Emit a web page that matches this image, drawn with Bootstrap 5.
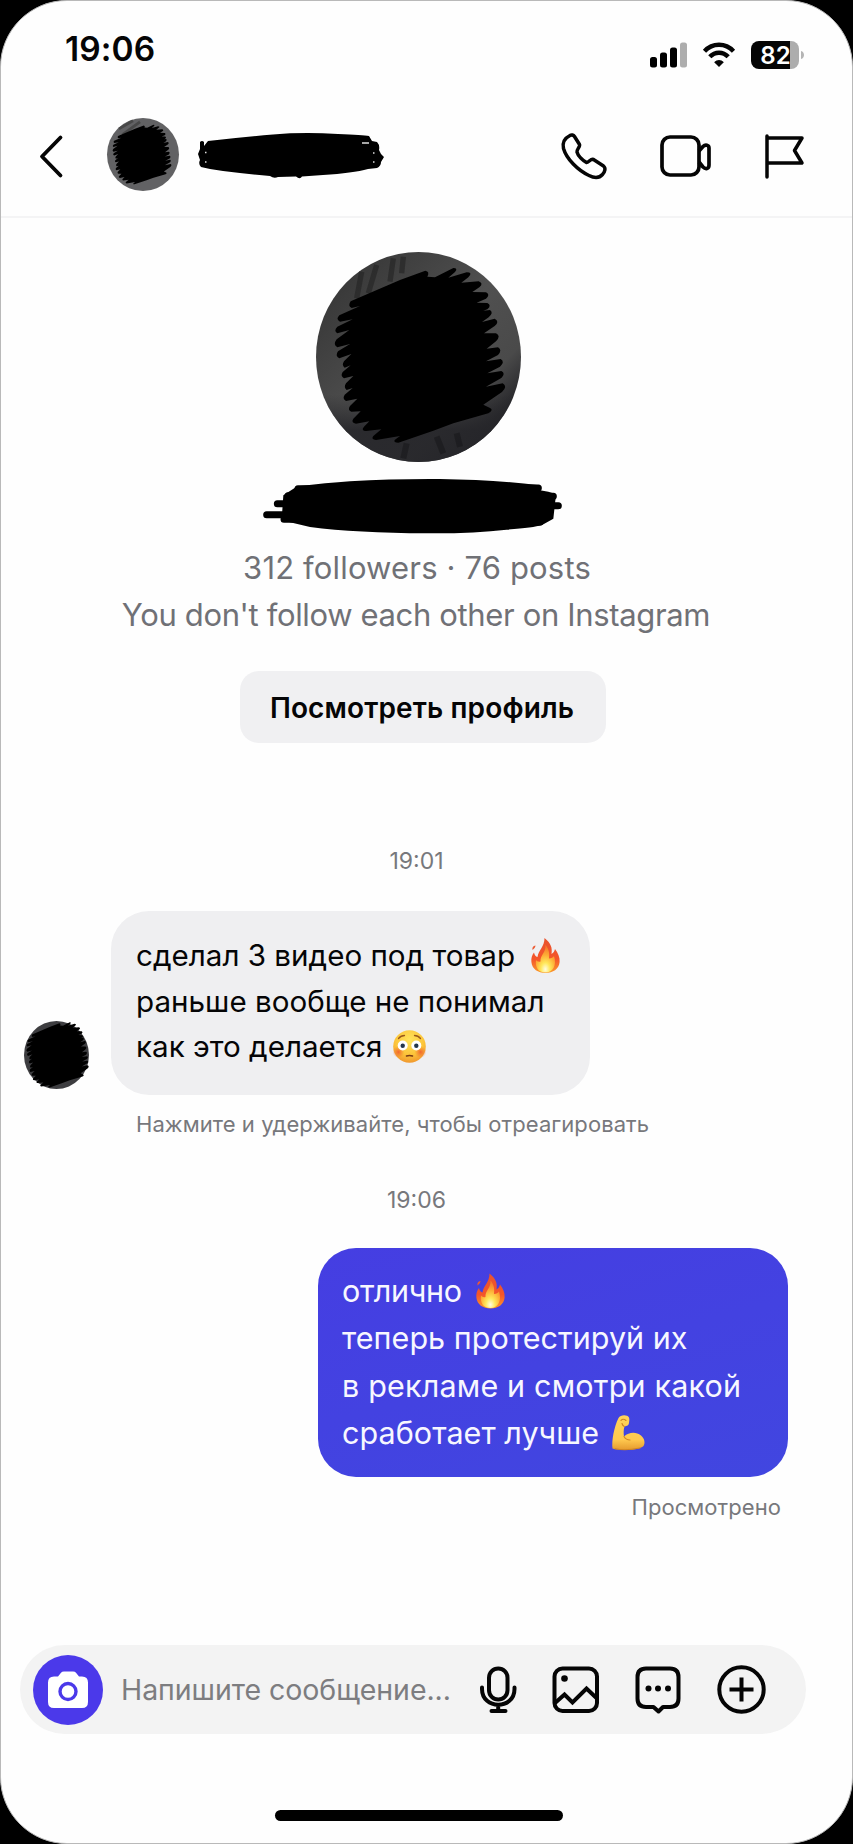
<!DOCTYPE html>
<html lang="ru">
<head>
<meta charset="utf-8">
<meta name="viewport" content="width=device-width, initial-scale=1">
<title>Чат</title>
<link rel="stylesheet" href="https://cdn.jsdelivr.net/npm/bootstrap@5.3.0/dist/css/bootstrap.min.css">
<style>
html,body{margin:0;background:#000;overflow:hidden}
body{font-family:Inter,"Liberation Sans",sans-serif;color:#050506}
svg{display:block;flex:none;overflow:visible}
.phone{width:853px;height:1844px;background:#fefefe;border:1px solid #b9b9b9;border-radius:67px;overflow:hidden}
.status{height:90px;padding:28px 48px 0 64px}
.clock{font-size:33.5px;line-height:40px;font-weight:600;letter-spacing:.1px}
.status-icons{margin-top:12px}
.topbar{height:127px;border-bottom:2px solid #f4f4f5;padding:5px 48px 0 38px}
.profile{padding:34px 19px 0 0}
.meta{font-size:31px;line-height:46.6px;color:#707176}
.meta-count{letter-spacing:.16px}
.meta-follow{letter-spacing:-.35px;margin-right:2px}
.btn-profile{width:366px;height:72px;margin:33px 0 0 12px;border-radius:19px;background:#f0f0f2;font-size:28px;letter-spacing:.13px;font-weight:600;color:#050506;padding:2px 2px 0 0}
.stamp{font-size:23px;line-height:26px;color:#77787c;padding-right:20px}
.bubble{border-radius:38px;white-space:nowrap}
.bubble-in{width:479px;height:184px;background:#efeff1;padding:22px 25px;font-size:29.6px;line-height:45.5px}
.bubble-out{width:470px;height:229px;background:linear-gradient(165deg,#453ee2,#4146e0);color:#f7f7ff;padding:19px 24px;font-size:30.5px;line-height:47.2px;letter-spacing:.05px;margin-right:64px}
.line-first{letter-spacing:-.35px}
.line-wide{letter-spacing:.18px}
.note{font-size:22px;line-height:26px;color:#77787c;letter-spacing:.06px}
.composer{width:786px;height:89px;border-radius:45px;background:#f3f3f3;margin:125px 0 0 19px;padding:0 40px 0 13px}
.cam{width:70px;height:70px;background:#4b39ea}
.placeholder-text{font-size:28.5px;letter-spacing:-.05px;color:#7d7d80;width:338px;margin-left:18px;line-height:40px;white-space:nowrap}
.home{width:288px;height:11px;margin:76px 0 0 274px;background:#000}
</style>
<script src="https://cdn.jsdelivr.net/npm/bootstrap@5.3.0/dist/js/bootstrap.bundle.min.js"></script>
</head>
<body>
<svg width="0" height="0" class="position-absolute">
<defs>
<linearGradient id="photo" x1="0" y1="0" x2="1" y2="1"><stop offset="0" stop-color="#454545"/><stop offset=".15" stop-color="#3a3a3a"/><stop offset=".5" stop-color="#505050"/><stop offset=".72" stop-color="#4a4a4a"/><stop offset=".85" stop-color="#242428"/><stop offset="1" stop-color="#222"/></linearGradient>
<linearGradient id="photoShade" x1="0" y1="0" x2="0" y2="1"><stop offset=".68" stop-color="#26262a" stop-opacity="0"/><stop offset=".85" stop-color="#26262a" stop-opacity=".9"/></linearGradient>
<linearGradient id="flameOuter" x1="0" y1="0" x2="0" y2="1"><stop offset="0" stop-color="#e8532f"/><stop offset=".6" stop-color="#f4552a"/><stop offset="1" stop-color="#fb9a2c"/></linearGradient>
<radialGradient id="flameInner" cx=".5" cy=".88" r=".8"><stop offset="0" stop-color="#fffde0"/><stop offset=".3" stop-color="#ffe75a"/><stop offset=".65" stop-color="#fdac35"/><stop offset="1" stop-color="#f57a2c"/></radialGradient>
<radialGradient id="faceFill" cx=".5" cy=".3" r=".75"><stop offset="0" stop-color="#ffe45c"/><stop offset=".6" stop-color="#fcc43a"/><stop offset="1" stop-color="#ee8f2c"/></radialGradient>
<radialGradient id="blush"><stop offset="0" stop-color="#f0552e" stop-opacity=".85"/><stop offset="1" stop-color="#f0702e" stop-opacity="0"/></radialGradient>
<linearGradient id="armFill" x1="0" y1="0" x2="0" y2="1"><stop offset="0" stop-color="#ffd45a"/><stop offset=".7" stop-color="#ffc94f"/><stop offset="1" stop-color="#e59a2e"/></linearGradient>
<symbol id="flame" viewBox="0 0 29 35">
<path d="M13.5 0C20 5 21.5 10 20.5 16C22.5 15 23.5 13 24 11C27 15 29 19 28.6 24C28 31 22 35 14.5 35C7 35 1 31 .4 24C0 20 1 17 3 14.5C3.6 17 4.5 18.5 6.5 19C7.500 12 13.500 9 13.500 0Z" fill="url(#flameOuter)"/>
<path d="M1.500 12C1 9.500 2 8 4.500 7.500C4.500 9.500 3 10.500 1.500 12Z" fill="#ec5a32"/>
<path d="M14.500 7C18.500 12 18.500 16 18 20.500C20.500 20.500 22 19.500 23 18C26 27 22 34.500 14.500 34.500C7 34.500 4 29 5 22C6 23.500 7.500 24 9.500 23.500C9 17 15 15 14.500 7Z" fill="url(#flameInner)"/>
</symbol>
<symbol id="scribble" viewBox="228 36 615 630">
<path fill="#000" d="M332 184 480 120 556 92 Q570 94 562 110L585 112 640 84Q655 84 645 96L625 113 680 97Q700 97 685 112L664 128 716 124Q732 130 718 142L697 156 738 157Q752 164 738 176L710 188 742 189Q756 196 742 208L730 212 750 210Q762 218 746 232L726 246 764 236Q780 244 764 258L732 280 768 280Q784 288 768 304L740 326 774 322Q788 330 774 345L738 364 782 357Q796 366 780 380L742 400 784 393Q798 400 784 414L738 440 788 430Q804 440 786 456L730 494 750 504Q762 510 745 520L640 550 580 572 475 608Q460 608 464 600L480 588 408 600Q392 598 400 588L424 568 378 573Q362 572 372 560L388 544 348 551Q332 548 340 536L362 514 334 515Q322 510 330 498L352 476 318 483Q306 476 314 464L338 444 320 450Q310 442 318 430L340 408 312 415Q300 408 308 396L332 376 314 383Q304 376 312 364L334 342 298 355Q284 348 294 334L330 312 292 322Q278 314 290 298L328 270 292 280Q280 272 292 260L338 238 300 245Q286 238 298 226L360 198 335 204Q322 198 332 184Z"/>
</symbol>
</defs>
</svg>

<main class="phone d-flex flex-column">
<div class="status d-flex justify-content-between align-items-start">
<div class="clock">19:06</div>
<div class="status-icons d-flex align-items-center">
<svg width="38" height="26" viewBox="0 0 38 26" style="margin-right:15px"><rect x="0" y="15" width="7" height="10.500" rx="2.500"/><rect x="10" y="10.500" width="7" height="15" rx="2.500"/><rect x="20" y="5.500" width="7" height="20" rx="2.500"/><rect x="30" y=".5" width="7" height="25" rx="2.500" fill="#adadad"/></svg>
<svg width="32" height="26" viewBox="0 0 32 26" style="margin-right:16px"><g fill="none" stroke="#050505" stroke-width="4.400"><path d="M1.500 9.200C9.500 .6 22.500 .6 30.500 9.200"/><path d="M6.800 14.800C12 9.300 20 9.300 25.200 14.800"/><path d="M11.200 20.200C14 17.200 18 17.200 20.800 20.200L16 25Z" fill="#050505" stroke="none"/></g></svg>
<svg width="53" height="28" viewBox="0 0 53 28"><path d="M8 0H39V28H8A8 8 0 0 1 0 20V8A8 8 0 0 1 8 0Z" fill="#050505"/><path d="M39 0h1a8 8 0 0 1 8 8v12a8 8 0 0 1-8 8h-1Z" fill="#adadad"/><path d="M50 10c4 1 4 7 0 8Z" fill="#b5b5b5"/><text x="24.500" y="22.500" text-anchor="middle" font-size="24" font-weight="600" fill="#fff" font-family="Inter,sans-serif">82</text></svg>
</div>
</div>

<header class="topbar d-flex align-items-center">
<svg width="24" height="42" viewBox="0 0 24 42" fill="none" stroke="#050505" stroke-width="3.800" stroke-linecap="round" stroke-linejoin="round"><path d="M21.500 2.500 3 21.500 21.500 40.500"/></svg>
<svg width="72" height="73" viewBox="228 36 615 630" preserveAspectRatio="none" style="margin:-4px 0 0 44px"><ellipse cx="535.500" cy="351" rx="307.500" ry="315" fill="#626264"/><path d="M330 130 450 60M360 180 510 70" stroke="#484848" stroke-width="24"/><use href="#scribble" x="220" y="36" width="605" height="640"/></svg>
<svg width="186" height="46" viewBox="0 0 186 46" style="margin-left:19px"><path d="M10 8Q45 4 75 1.500Q105-1 140 1Q165 2 171 3L174 8 179 9Q182 12 181 17L183 21 186 24 183 29Q183 33 179 35L170 36Q155 40 125 42L104 43.500Q102 47 98 43.500L80 44Q76 46 72 43Q50 41 25 38L12 36 3 34Q0 31 2 27L0 21 2 16 2 9Q4 7 6 9L6 13Z"/><path d="M164 10h7M7 19.500h1.500M7 29h1.500M175 20h1.500M175 29h1.500" stroke="#ddd" stroke-width="1.500"/></svg>
<svg class="ms-auto" width="46" height="46" viewBox="0 0 46 46" fill="none" stroke="#050505" stroke-width="3.500" stroke-linejoin="round"><path d="M9 2.500C10.500 1.500 12.500 2 13.500 3.500L18.500 11.500C19.500 13.500 15.500 16.500 16 19C17 23 22 27.500 25.500 29.500C28.500 29 29.500 25.500 32.500 26.500L42.500 33C45 35 44 39 41.500 41.500C38 45.500 34 45.500 28 42.500C17 37.500 5.500 26 2.500 15.500C1 9 4 5 9 2.500Z"/></svg>
<svg width="51" height="42" viewBox="0 0 51 42" fill="none" stroke="#050505" stroke-width="3.700" stroke-linejoin="round" style="margin-left:53px"><rect x="2" y="2" width="37" height="38" rx="8"/><path d="M39 16 43 11.500C45.500 9 49 10 49 13V30C49 34 45.500 34.500 43 32L39 27"/></svg>
<svg width="40" height="45" viewBox="0 0 40 45" fill="none" stroke="#050505" stroke-width="3.500" stroke-linecap="round" stroke-linejoin="round" style="margin-left:53px"><path d="M3 2V43M3 4H38L30.500 16.500 38 29H3"/></svg>
</header>

<section class="profile d-flex flex-column align-items-center">
<svg width="205" height="210" viewBox="228 36 615 630" style="margin-left:2px"><ellipse cx="535.500" cy="351" rx="307.500" ry="315" fill="url(#photo)"/><ellipse cx="535.500" cy="351" rx="307.500" ry="315" fill="url(#photoShade)"/><path d="M365 95 350 175M410 75 385 160M460 55 450 125M490 50 485 100" stroke="#232323" stroke-width="16" opacity=".6"/><path d="M500 610 490 655M590 590 610 640M650 580 660 620" stroke="#151518" stroke-width="18" opacity=".5"/><use href="#scribble" x="228" y="36" width="615" height="630"/></svg>
<svg width="300" height="55" viewBox="66 716 900 165" style="margin:17px 11px 0 0"><path d="M172 738Q260 728 330 723Q460 715 600 716Q760 718 898 735Q908 742 900 750L925 754 948 762 940 835 905 855Q880 862 800 868Q700 880 560 879Q350 878 210 860L150 846 125 838 130 765Z"/><path d="M80 823H200M112 790H250M144 766H250M174 745H260M132 837H250M895 743H800M940 768H840M955 796H850M927 823H830M900 845H800" stroke="#000" stroke-width="21" stroke-linecap="round"/></svg>
<div class="meta meta-count" style="margin-top:11px">312 followers · 76 posts</div>
<div class="meta meta-follow">You don't follow each other on Instagram</div>
<button type="button" class="btn btn-profile">Посмотреть профиль</button>
</section>

<section>
<div class="stamp text-center" style="margin-top:105px">19:01</div>
<div class="d-flex align-items-end" style="margin-top:37px">
<svg width="65" height="68" viewBox="228 36 615 630" preserveAspectRatio="none" style="margin:0 22px 6px 23px"><ellipse cx="535.500" cy="351" rx="307.500" ry="315" fill="#3d3d40"/><use href="#scribble" x="185" y="-30" width="710" height="770"/></svg>
<div class="bubble bubble-in">
<div class="d-flex align-items-center"><span>сделал 3 видео под товар</span><svg width="29" height="35" style="margin-left:16px"><use href="#flame" width="29" height="35"/></svg></div>
<div>раньше вообще не понимал</div>
<div class="d-flex align-items-center"><span>как это делается</span><svg width="33" height="33" viewBox="0 0 33 33" style="margin-left:11px"><circle cx="16.500" cy="16.500" r="16.300" fill="url(#faceFill)"/><circle cx="5.500" cy="22" r="6" fill="url(#blush)"/><circle cx="27.500" cy="22" r="6" fill="url(#blush)"/><path d="M5.500 8.500Q8 5.500 11.500 5.500M21.500 5.500Q25 5.500 27.500 8.500" fill="none" stroke="#9a5a1c" stroke-width="1.300" stroke-linecap="round"/><circle cx="9.700" cy="15.500" r="5" fill="#fff"/><circle cx="23.300" cy="15.500" r="5" fill="#fff"/><circle cx="9.700" cy="15.700" r="2.200" fill="#23364d"/><circle cx="23.300" cy="15.700" r="2.200" fill="#23364d"/><path d="M13.500 26Q16.500 25 19.500 26" fill="none" stroke="#7a3c14" stroke-width="1.500" stroke-linecap="round"/></svg></div>
</div>
</div>
<div class="note" style="margin:16px 0 0 135px">Нажмите и удерживайте, чтобы отреагировать</div>
<div class="stamp text-center" style="margin-top:50px">19:06</div>
<div class="bubble bubble-out ms-auto" style="margin-top:35px">
<div class="d-flex align-items-center"><span class="line-first">отлично</span><svg width="29" height="36" style="margin-left:14px"><use href="#flame" width="29" height="36"/></svg></div>
<div>теперь протестируй их</div>
<div class="line-wide">в рекламе и смотри какой</div>
<div class="d-flex align-items-center"><span>сработает лучше</span><svg width="33" height="35" viewBox="0 0 33 35" style="margin-left:13px"><path d="M6.500 3C8 .5 12 -.5 15 .8C18 2 17.500 5 17 8C16.800 10.500 15 11 12.500 11.500C11.500 14.500 11.500 18 12 21.500C17 17 24 16.500 29 20.500C32.500 23.500 33.500 28 31.500 31C27 35.500 9 36 .5 33.500C-.5 26 2 12 6.500 3Z" fill="url(#armFill)"/><path d="M9 5.500Q11 3 14 5.500M12.300 11.500Q10.500 10.500 10 8.500M12 21.500Q14 25 18 25M3 33.800Q14 36 28 33" fill="none" stroke="#cf8424" stroke-width="1.100" stroke-linecap="round"/></svg></div>
</div>
<div class="note text-end" style="margin:17px 71px 0 0">Просмотрено</div>
</section>

<div class="composer d-flex align-items-center">
<div class="cam rounded-circle d-flex align-items-center justify-content-center"><svg width="40" height="38" viewBox="0 0 40 38" fill="#fff"><path d="M6 5.500H10L13 1.800Q14 .5 16 .5H25Q27 .5 28 1.800L31 5.500H34Q40 5.500 40 11.500V31Q40 37 34 37H6Q0 37 0 31V11.500Q0 5.500 6 5.500Z"/><circle cx="20" cy="20.500" r="8" stroke="#4b39ea" stroke-width="3.400"/></svg></div>
<div class="placeholder-text">Напишите сообщение...</div>
<div class="d-flex align-items-center ms-auto" style="gap:36px">
<svg width="36" height="47" viewBox="0 0 36 47" fill="none" stroke="#050505" stroke-width="4" stroke-linecap="round"><rect x="9" y="2.500" width="18.500" height="31" rx="9.250"/><path d="M2 21.500V23C2 44 34.500 44 34.500 23V21.500M18.200 39V44M11.500 45H25.500"/></svg>
<svg width="47" height="47" viewBox="0 0 47 47" fill="none" stroke="#050505" stroke-width="4"><rect x="2.500" y="2.500" width="42.500" height="42.500" rx="8"/><path d="M3 37 12.500 28.500 20.500 36.500 34.500 22.500 45 32.500"/><circle cx="12.500" cy="12.500" r="3.300" fill="#050505" stroke="none"/></svg>
<svg width="46" height="48" viewBox="0 0 46 48" fill="none" stroke="#050505" stroke-width="4" stroke-linejoin="round"><path d="M11 2.500H35Q43.500 2.500 43.500 11V32.500Q43.500 41 35 41H28L23.500 45.500 18.500 41H11Q2.500 41 2.500 32.500V11Q2.500 2.500 11 2.500Z"/><g fill="#050505" stroke="none"><circle cx="13.500" cy="22.500" r="3"/><circle cx="23" cy="22.500" r="3"/><circle cx="33" cy="22.500" r="3"/></g></svg>
<svg width="49" height="49" viewBox="0 0 49 49" fill="none" stroke="#050505" stroke-width="4"><circle cx="24.500" cy="24.500" r="22.200"/><path d="M24.500 12.500V36.500M12.500 24.500H36.500"/></svg>
</div>
</div>
<div class="home rounded-pill"></div>
</main>
</body>
</html>
